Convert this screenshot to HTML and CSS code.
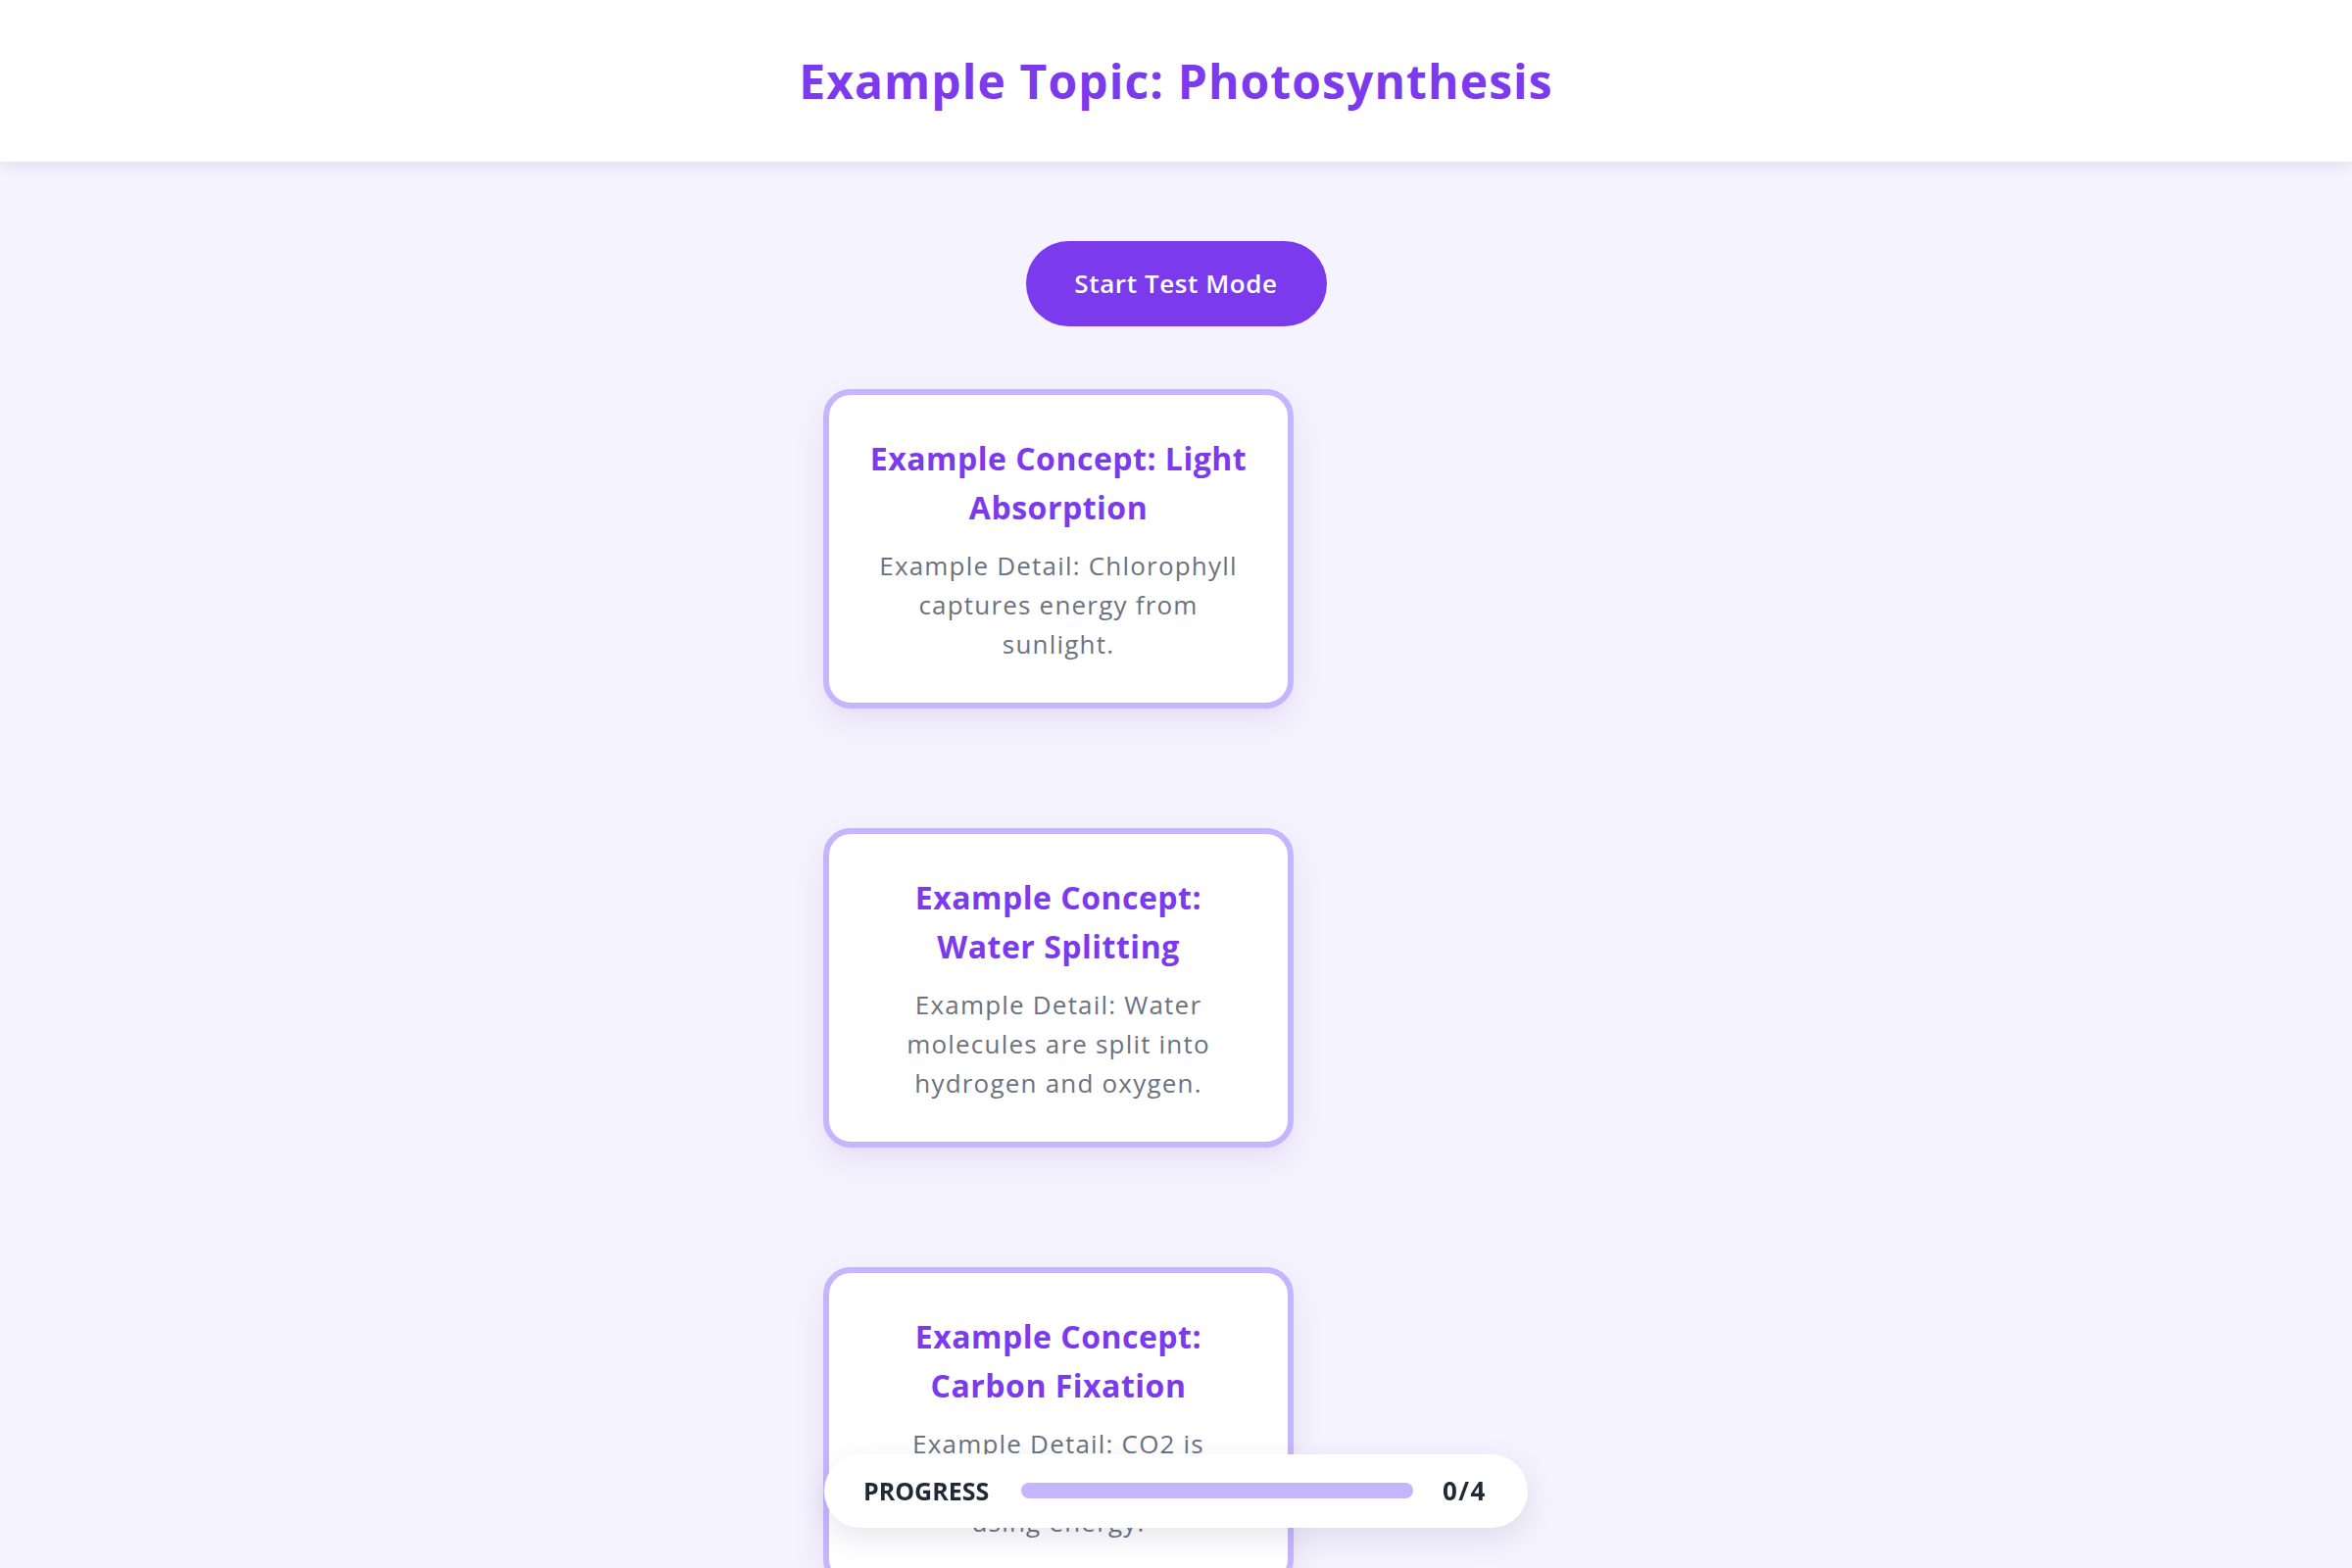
FILE: index.html
```html
<!DOCTYPE html>
<html lang="en">
<head>
<meta charset="utf-8">
<title>Example Topic: Photosynthesis</title>
<link rel="stylesheet" href="styles.css">
</head>
<body>
<header class="topbar">
  <h1 class="topic-title">Example Topic: Photosynthesis</h1>
</header>
<main class="main">
  <div class="actions">
    <button class="test-btn" type="button">Start Test Mode</button>
  </div>
  <div class="concepts">
    <div class="card">
      <h2 class="card-title">Example Concept: Light Absorption</h2>
      <p class="card-detail">Example Detail: Chlorophyll captures energy from sunlight.</p>
    </div>
    <div class="card">
      <h2 class="card-title">Example Concept: Water Splitting</h2>
      <p class="card-detail">Example Detail: Water molecules are split into hydrogen and oxygen.</p>
    </div>
    <div class="card">
      <h2 class="card-title">Example Concept: Carbon Fixation</h2>
      <p class="card-detail">Example Detail: CO2 is converted into glucose using&nbsp;energy.</p>
    </div>
    <div class="card">
      <h2 class="card-title">Example Concept: Glucose Storage</h2>
      <p class="card-detail">Example Detail: Glucose is stored as starch for later use.</p>
    </div>
  </div>
</main>
<div class="progress">
  <span class="progress-label">PROGRESS</span>
  <span class="progress-track"><span class="progress-fill"></span></span>
  <span class="progress-count">0/4</span>
</div>
</body>
</html>
```
FILE: styles.css
```css
* { box-sizing: border-box; }
html, body { margin: 0; padding: 0; }
body {
  background: #f5f3ff;
  font-family: "Open Sans", "Noto Sans", sans-serif;
  color: #1f2937;
}
.topbar {
  background: #ffffff;
  height: 165px;
  display: flex;
  align-items: center;
  justify-content: center;
  box-shadow: 0 4px 14px rgba(60, 50, 100, 0.10);
  position: relative;
  z-index: 2;
}
.topic-title {
  margin: 0;
  font-size: 48px;
  font-weight: 700;
  color: #7c3aed;
  line-height: 72px;
  letter-spacing: 1.1px;
}
.main {
  padding: 81px 0 200px;
}
.actions {
  display: flex;
  justify-content: center;
  margin-bottom: 64px;
}
.test-btn {
  background: #7c3aed;
  color: #ffffff;
  border: none;
  border-radius: 999px;
  font-family: inherit;
  font-size: 26px;
  font-weight: 600;
  line-height: 36px;
  letter-spacing: 0.6px;
  padding: 25px 0 26px;
  width: 307px;
}
.concepts {
  width: 720px;
  margin: 0 auto;
  display: flex;
  flex-direction: column;
  align-items: flex-start;
  gap: 122px;
}
.card {
  width: 480px;
  background: #ffffff;
  border: 6px solid #c4b5fd;
  border-radius: 28px;
  padding: 40px 40px 40px;
  text-align: center;
  box-shadow: 0 12px 30px rgba(76, 50, 140, 0.10);
}
.card-title {
  margin: 0 0 14px;
  font-size: 32px;
  line-height: 50px;
  font-weight: 700;
  color: #7c3aed;
  letter-spacing: 0.5px;
}
.card-detail {
  margin: 0;
  font-size: 26px;
  line-height: 40px;
  letter-spacing: 1.2px;
  color: #6b7280;
}
.progress {
  position: fixed;
  left: 50%;
  bottom: 41px;
  transform: translateX(-50%);
  display: flex;
  align-items: center;
  gap: 30px;
  background: #ffffff;
  border-radius: 999px;
  padding: 19px 40px 20px;
  box-shadow: 0 10px 30px rgba(60, 50, 100, 0.12);
  white-space: nowrap;
}
.progress-label {
  font-size: 25px;
  line-height: 36px;
  font-weight: 700;
  color: #1f2937;
  width: 131px;
}
.progress-track {
  display: block;
  width: 400px;
  height: 16px;
  border-radius: 999px;
  background: #c4b5fd;
  overflow: hidden;
}
.progress-fill {
  display: block;
  width: 0;
  height: 100%;
  background: #7c3aed;
}
.progress-count {
  font-size: 26px;
  line-height: 36px;
  font-weight: 700;
  letter-spacing: 1.5px;
  color: #1f2937;
  width: 47px;
}
```
